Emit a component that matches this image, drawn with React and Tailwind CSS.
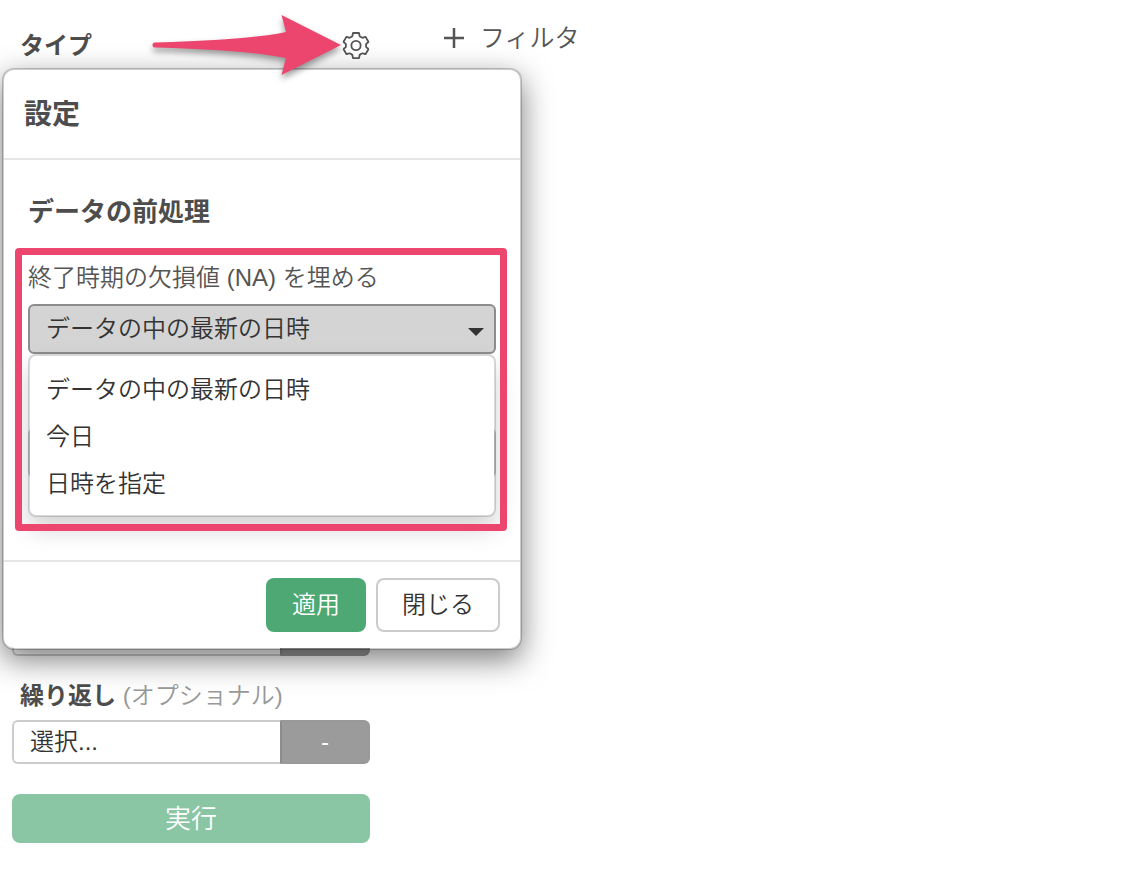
import React, { useState } from 'react';

const fillOptions = ['データの中の最新の日時', '今日', '日時を指定'];

const GearIcon = () => (
    <svg width="28" height="28" viewBox="-0.5 0 29 29" fill="none" stroke="#555555" strokeWidth="1.9" strokeLinejoin="round" aria-hidden="true">
        <path d="M10.900 1h6.200l.6 2.800q.2.700.8 1l1.600.9q.6.400 1.300.1l2.100-.7q.4-.1.600.2l2.600 4.600q.2.400-.1.700l-1.700 1.500q-.5.500-.5 1.100v1.600q0 .6.5 1.100l1.700 1.500q.3.300.1.700l-2.600 4.600q-.2.300-.6.200l-2.100-.7q-.7-.3-1.300.1l-1.600.9q-.6.300-.8 1l-.6 2.800h-6.200l-.6-2.800q-.2-.7-.8-1l-1.600-.9q-.6-.4-1.300-.1l-2.100.7q-.4.100-.6-.2l-2.600-4.600q-.2-.4.100-.7l1.700-1.500q.5-.5.5-1.100v-1.600q0-.6-.5-1.100l-1.700-1.500q-.3-.3-.1-.7l2.600-4.600q.2-.3.600-.2l2.100.7q.7.300 1.300-.1l1.600-.9q.6-.3.800-1z" />
        <circle cx="14" cy="14" r="4.800" />
    </svg>
);

const Arrow = () => (
    <svg className="pointer-events-none absolute left-[148px] top-[8px] z-20 drop-shadow-[0_4px_3px_rgba(0,0,0,0.4)]" width="200" height="76" viewBox="0 0 200 76" aria-hidden="true">
        <path d="M7 34.500 Q100 32 138 24 L133.500 7 L193 37 L133.500 67 L138 50 Q100 42 7 39.500 A2.500 2.500 0 0 1 7 34.500z" fill="#ec466e" />
    </svg>
);

const FieldRow = ({ id, label, text, action }) => (
    <div className="flex h-11">
        <select id={id} aria-label={label} className="min-w-0 flex-1 appearance-none rounded-l-md border-2 border-r-0 border-[#cccccc] bg-white px-4 text-2xl leading-none text-[#333333]">
            <option>{text}</option>
        </select>
        <button type="button" className="w-[90px] rounded-r-md border-2 border-[#999999] border-l-[#8c8c8c] bg-[#9b9b9b] text-2xl leading-none text-white">
            {action}
        </button>
    </div>
);

const SettingsDialog = () => {
    const [value, setValue] = useState(fillOptions[0]);

    return (
        <div role="dialog" aria-labelledby="settings-title" className="absolute left-[2px] top-[68px] z-10 w-[520px] rounded-xl border-2 border-black/20 bg-white bg-clip-padding shadow-[0_10px_30px_rgba(0,0,0,0.5)]">
            <div className="border-b-2 border-[#e5e5e5] px-5 pt-[25px] pb-[23px]">
                <h2 id="settings-title" className="text-[28px] leading-10 font-bold">設定</h2>
            </div>
            <div className="px-[11px] pt-8 pb-[29px]">
                <h3 className="px-[13px] text-[26px] leading-10 font-bold">データの前処理</h3>
                <div className="relative mt-4 px-[13px] pt-3 pb-[53px]">
                    <label htmlFor="fill-na" className="block text-2xl leading-9 text-[#555555]">終了時期の欠損値 (NA) を埋める</label>
                    <div className="relative mt-2">
                        <select
                            id="fill-na"
                            value={value}
                            onChange={(e) => setValue(e.target.value)}
                            className="block h-[50px] w-full appearance-none rounded-md border-2 border-[#8c8c8c] bg-[#d4d4d4] px-4 text-2xl text-[#333333]"
                        >
                            {fillOptions.map((option) => (
                                <option key={option}>{option}</option>
                            ))}
                        </select>
                        <svg className="pointer-events-none absolute right-3 top-6" width="16" height="8" viewBox="0 0 16 8" aria-hidden="true">
                            <path d="M0 0h16L8 8z" fill="#333333" />
                        </svg>
                        <ul className="absolute inset-x-0 top-full rounded-lg border-2 border-black/15 bg-white bg-clip-padding pt-2.5 pb-2 shadow-[0_12px_24px_rgba(0,0,0,0.175)]">
                            {fillOptions.map((option) => (
                                <li key={option}>
                                    <button type="button" onClick={() => setValue(option)} className="block w-full px-4 text-left text-2xl leading-[47px] text-[#333333]">
                                        {option}
                                    </button>
                                </li>
                            ))}
                        </ul>
                    </div>
                    <div className="mt-[74px] h-[50px] rounded-md border-2 border-[#cccccc]" />
                    <div className="pointer-events-none absolute inset-y-0 left-0 right-0.5 rounded-sm border-[7px] border-[#ec466e]" />
                </div>
            </div>
            <div className="flex justify-end gap-2.5 border-t-2 border-[#e5e5e5] px-5 py-4">
                <button type="button" className="h-[54px] rounded-lg bg-[#4da873] px-[26px] text-2xl text-white">適用</button>
                <button type="button" className="h-[54px] rounded-lg border-2 border-[#cccccc] bg-white px-6 text-2xl text-[#333333]">閉じる</button>
            </div>
        </div>
    );
};

const App = () => (
    <div className="relative flex min-h-screen items-start bg-white font-['Liberation_Sans','Noto_Sans_CJK_JP',sans-serif] font-[350] text-[#4d4d4d]">
        <form className="ml-3 w-[358px]">
            <div className="flex items-center justify-between pt-6 pl-2">
                <h1 className="text-2xl leading-[44px] font-bold">タイプ</h1>
                <button type="button" aria-label="設定"><GearIcon /></button>
            </div>
            <div className="mt-[544px]">
                <FieldRow id="status" label="ステータス" />
            </div>
            <label htmlFor="repeat" className="block pt-[18px] pb-0.5 pl-2 text-2xl leading-[44px]">
                <span className="font-bold">繰り返し</span> <span className="text-[#999999]">(オプショナル)</span>
            </label>
            <FieldRow id="repeat" text="選択..." action="-" />
            <button type="button" className="mt-[30px] h-[49px] w-full rounded-lg bg-[#8bc6a4] text-[26px] leading-none text-white">実行</button>
        </form>
        <button type="button" className="mt-4 ml-[74px] flex items-center gap-4 text-[25px] leading-[44px] text-[#555555]">
            <svg width="20" height="20" viewBox="0 0 20 20" stroke="#555555" strokeWidth="2.5" aria-hidden="true">
                <path d="M10 0v20M0 10h20" />
            </svg>
            フィルタ
        </button>
        <SettingsDialog />
        <Arrow />
    </div>
);

export default App;
